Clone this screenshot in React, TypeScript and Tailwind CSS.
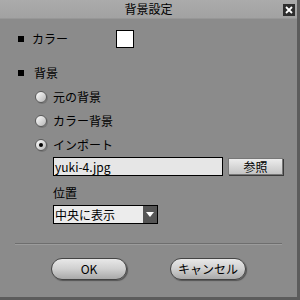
import React from 'react'

const font = { fontFamily: '"Noto Sans CJK JP", "Noto Sans", sans-serif' }

function Radio({ label, checked }: { label: string; checked?: boolean }) {
  return (
    <div className="flex items-center h-[24px]">
      <div className="w-[12px] h-[12px] rounded-full border border-[#5a5a5a] bg-gradient-to-br from-[#ffffff] to-[#b5b5b5] flex items-center justify-center shadow-[1px_1px_0_#777]">
        {checked && <div className="w-[4px] h-[4px] rounded-full bg-black" />}
      </div>
      <span className="ml-[6px] text-[12px] text-black">{label}</span>
    </div>
  )
}

function PillButton({ label }: { label: string }) {
  return (
    <button className="w-[76px] h-[22px] rounded-full border border-[#444] bg-gradient-to-b from-[#e8e8e8] via-[#cfcfcf] to-[#a9a9a9] shadow-[1px_1px_1px_#555] text-[12px] text-black flex items-center justify-center leading-none">
      {label}
    </button>
  )
}

export default function App() {
  return (
    <div style={font} className="w-[300px] h-[300px] bg-[#8b8b8b] flex flex-col border-r-[3px] border-b-[3px] border-[#5c5c5c] overflow-hidden">
      {/* title bar */}
      <div className="relative h-[19px] bg-gradient-to-b from-[#ababab] to-[#a2a2a2] border-b border-[#979797] flex items-center justify-center">
        <span className="text-[12px] text-black leading-none">背景設定</span>
        <div className="absolute right-[2px] top-[4px] w-[12px] h-[12px] bg-[#2e2e2e] flex items-center justify-center">
          <svg width="8" height="8" viewBox="0 0 8 8">
            <path d="M1 1L7 7M7 1L1 7" stroke="#fff" strokeWidth="1.8" />
          </svg>
        </div>
      </div>

      <div className="flex flex-col pl-[18px]">
        {/* color */}
        <div className="flex items-center h-[18px] mt-[11px]">
          <div className="w-[6px] h-[6px] bg-black" />
          <span className="ml-[8px] text-[12px] text-black w-[84px]">カラー</span>
          <div className="w-[18px] h-[18px] bg-white border border-black" />
        </div>

        {/* background */}
        <div className="flex items-center h-[18px] mt-[16px]">
          <div className="w-[6px] h-[6px] bg-black" />
          <span className="ml-[10px] text-[12px] text-black">背景</span>
        </div>

        <div className="flex flex-col pl-[17px] mt-[3px]">
          <Radio label="元の背景" />
          <Radio label="カラー背景" />
          <Radio label="インポート" checked />

          <div className="flex items-center pl-[18px]">
            <div className="w-[170px] h-[19px] bg-[#e6e6e6] border border-black flex items-center px-[1px] text-[12px] text-black leading-none">
              yuki-4.jpg
            </div>
            <button className="ml-[5px] w-[55px] h-[17px] bg-gradient-to-b from-[#ececec] to-[#c4c4c4] border border-[#777] shadow-[1px_1px_0_#3a3a3a] text-[12px] text-black flex items-center justify-center leading-none">
              参照
            </button>
          </div>

          <div className="pl-[18px] mt-[11px] text-[12px] text-black leading-none">位置</div>

          <div className="ml-[18px] mt-[6px] flex w-[105px] h-[19px] border border-black">
            <div className="flex-1 bg-[#ececec] flex items-center pl-[1px] text-[12px] text-black leading-none">
              中央に表示
            </div>
            <div className="w-[14px] bg-[#555] flex items-center justify-center">
              <svg width="8" height="5" viewBox="0 0 8 5">
                <path d="M0 0H8L4 5Z" fill="#fff" />
              </svg>
            </div>
          </div>
        </div>
      </div>

      {/* separator */}
      <div className="mx-[15px] mt-[19px] h-[2px] border-t border-[#6e6e6e] border-b border-b-[#9c9c9c]" />

      <div className="flex justify-center gap-[43px] mt-[13px]">
        <PillButton label="OK" />
        <PillButton label="キャンセル" />
      </div>
    </div>
  )
}
